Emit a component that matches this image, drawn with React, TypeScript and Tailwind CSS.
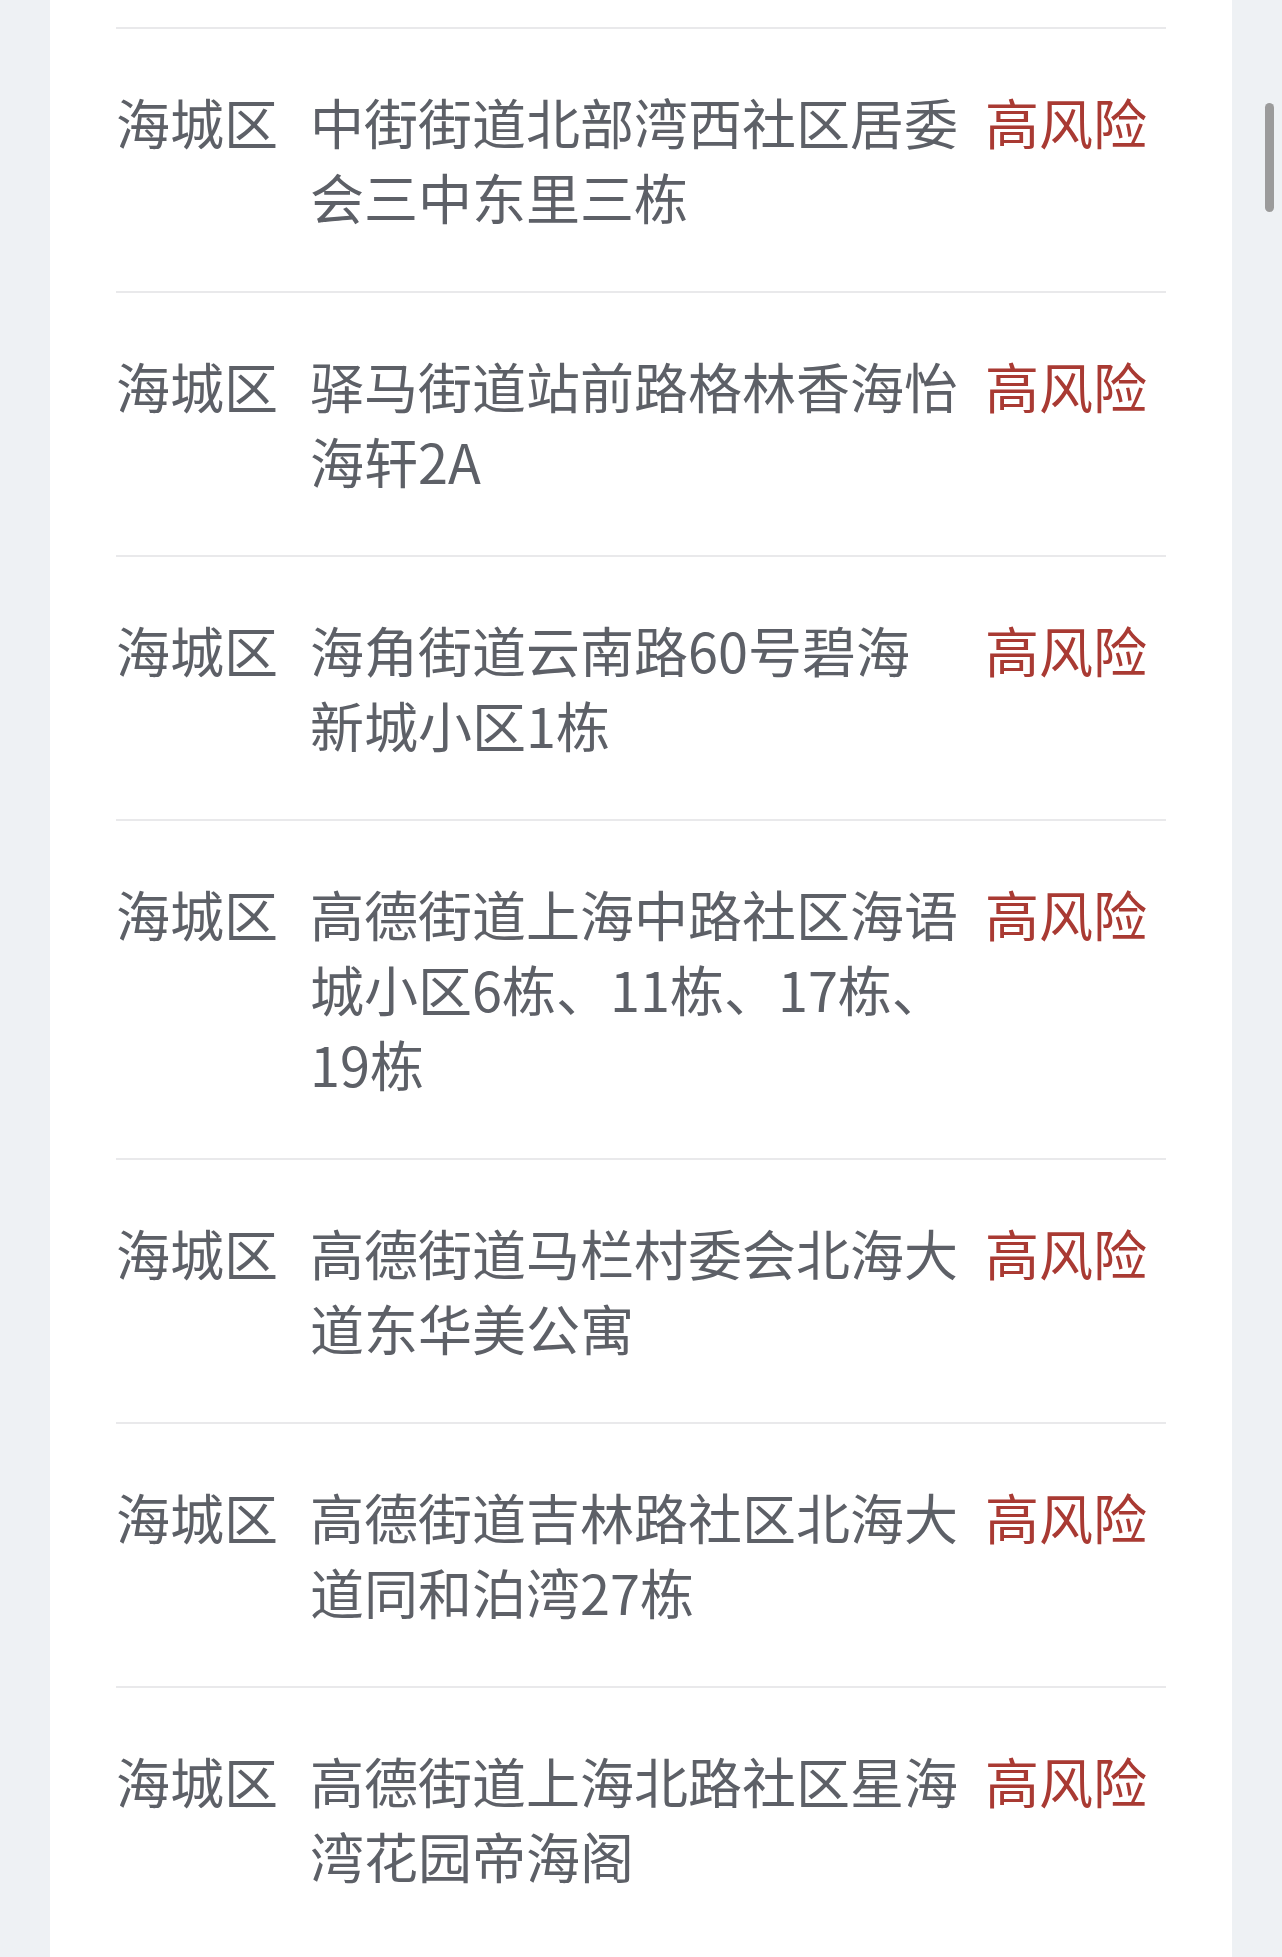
const rows = [
  { district: '海城区', address: '中街街道北部湾西社区居委会三中东里三栋', level: '高风险' },
  { district: '海城区', address: '驿马街道站前路格林香海怡海轩2A', level: '高风险' },
  { district: '海城区', address: '海角街道云南路60号碧海新城小区1栋', level: '高风险' },
  { district: '海城区', address: '高德街道上海中路社区海语城小区6栋、11栋、17栋、19栋', level: '高风险' },
  { district: '海城区', address: '高德街道马栏村委会北海大道东华美公寓', level: '高风险' },
  { district: '海城区', address: '高德街道吉林路社区北海大道同和泊湾27栋', level: '高风险' },
  { district: '海城区', address: '高德街道上海北路社区星海湾花园帝海阁', level: '高风险' },
]

export default function App() {
  return (
    <div
      className="relative h-[1957px] w-full overflow-hidden bg-[#eef1f4]"
      style={{ fontFamily: '"Noto Sans CJK SC", "Noto Sans", sans-serif' }}
    >
      <div className="mx-[50px] h-full bg-white px-[66px] pt-[27px]">
        {rows.map((row, i) => (
          <div
            key={i}
            className="grid grid-cols-[194px_648px_1fr] border-t-2 border-[#e9e9eb] pt-[55px] pb-[57px] text-[54px] leading-[75px] text-[#5d6067]"
          >
            <div>{row.district}</div>
            <div className="break-all">{row.address}</div>
            <div className="pl-[27px] text-[#a93a33]">{row.level}</div>
          </div>
        ))}
      </div>
      <div className="absolute left-[1265px] top-[103px] h-[109px] w-[9px] rounded-full bg-[#9b9b9b]" />
    </div>
  )
}
